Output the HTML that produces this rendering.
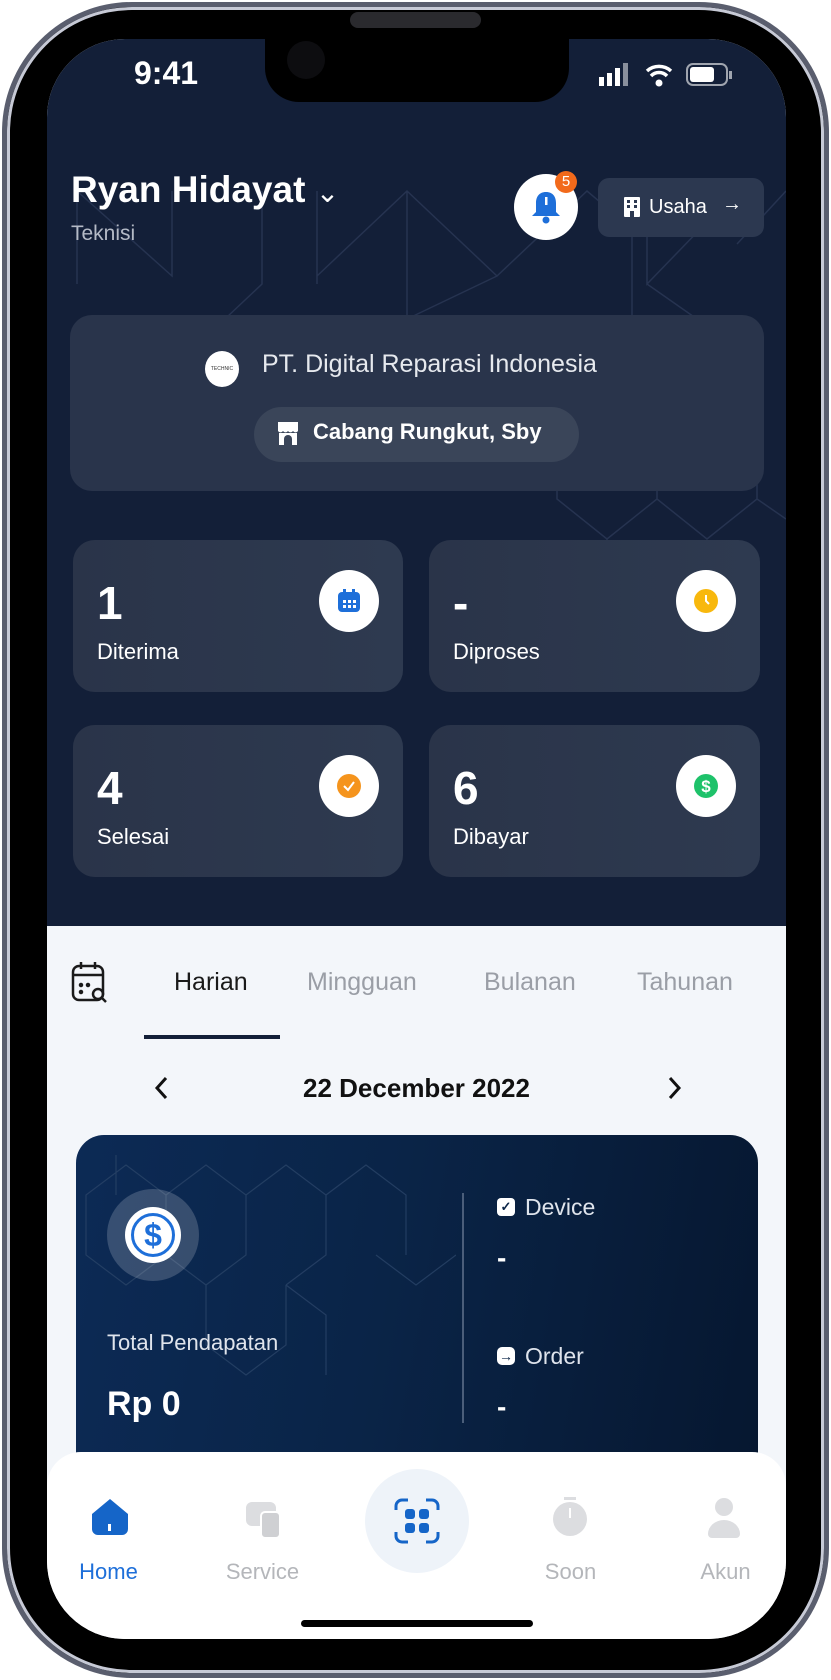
<!DOCTYPE html>
<html><head><meta charset="utf-8"><style>
*{margin:0;padding:0;box-sizing:border-box}
body{width:831px;height:1680px;background:#fff;position:relative;overflow:hidden;font-family:"Liberation Sans",sans-serif}
.a{position:absolute}
.frame{left:2px;top:2px;width:827px;height:1676px;border-radius:130px;background:#000;border:5px solid #5a5e6e;box-shadow:inset 0 0 0 3px #c7cad6}
.screen{left:47px;top:39px;width:739px;height:1600px;border-radius:78px;overflow:hidden;background:#f3f6fa}
.card{background:linear-gradient(90deg,#2a3449,#2e3a50);border-radius:22px}
.w{color:#fff}
.circ{background:#fff;border-radius:50%}
</style></head><body>
<div class="a frame"></div>
<div class="a" style="left:350px;top:12px;width:131px;height:16px;border-radius:8px;background:#2a2a2e"></div>
<div class="a screen">
  <div class="a" style="left:0;top:0;width:739px;height:887px;background:#131f38"></div>
  <svg class="a" style="left:0;top:0" width="739" height="700" stroke="#263350" stroke-width="1.5" fill="none">
    <path d="M30 152V245M30 152L125 237V152M215 152V245L180 278M270 152V245M270 237L360 152L450 237L540 152L585 190V280M360 152V280M450 237L360 280M600 152V245L690 152M600 245L650 280M739 152L690 205M510 360L560 320L610 360V460L560 500L510 460ZM610 360L660 320L710 360V460L660 500L610 460ZM560 500V560M710 460L739 480M560 320V280M660 320V280"/>
  </svg>
  <div class="a w" style="left:87px;top:16px;font-size:32px;font-weight:bold">9:41</div>
  <div class="a" style="left:218px;top:0;width:304px;height:63px;background:#000;border-radius:0 0 34px 34px"></div>
  <div class="a" style="left:240px;top:2px;width:38px;height:38px;border-radius:50%;background:#0d0d10"></div>
  <svg class="a" style="left:550px;top:22px" width="140" height="30">
    <rect x="2" y="16" width="5" height="9" fill="#fff"/><rect x="10" y="12" width="5" height="13" fill="#fff"/><rect x="18" y="7" width="5" height="18" fill="#fff"/><rect x="26" y="2" width="5" height="23" fill="#fff" opacity=".5"/>
    <path d="M50 10a18 18 0 0 1 24 0M54 15a11 11 0 0 1 16 0" stroke="#fff" stroke-width="3.5" fill="none"/><circle cx="62" cy="22" r="3.5" fill="#fff"/>
    <rect x="90" y="3" width="40" height="21" rx="6" stroke="#fff" stroke-opacity=".6" stroke-width="2" fill="none"/><rect x="93" y="6" width="24" height="15" rx="3" fill="#fff"/><rect x="132" y="10" width="3" height="8" fill="#fff" opacity=".6"/>
  </svg>
  <div class="a w" style="left:24px;top:130px;font-size:37px;font-weight:bold">Ryan Hidayat <span style="font-weight:normal;font-size:28px">&#8964;</span></div>
  <div class="a" style="left:24px;top:183px;font-size:21px;color:#b4bac6">Teknisi</div>
  <div class="a circ" style="left:467px;top:135px;width:64px;height:66px"></div>
  <svg class="a" style="left:482px;top:150px" width="34" height="36"><path d="M17 3c-7 0-10 5-10 11v9l-4 4h28l-4-4v-9c0-6-3-11-10-11z" fill="#1e6fd9"/><circle cx="17" cy="31" r="3.5" fill="#1e6fd9"/><rect x="16" y="8" width="2.5" height="8" fill="#fff"/></svg>
  <div class="a" style="left:508px;top:132px;width:22px;height:22px;border-radius:50%;background:#f26a1b;color:#fff;font-size:15px;text-align:center;line-height:22px">5</div>
  <div class="a" style="left:551px;top:139px;width:166px;height:59px;border-radius:11px;background:#2c3850"></div>
  <svg class="a" style="left:576px;top:157px" width="18" height="22"><rect x="1" y="1" width="16" height="20" rx="1" fill="#fff"/><g fill="#2c3850"><rect x="4" y="4" width="3" height="3"/><rect x="11" y="4" width="3" height="3"/><rect x="4" y="9" width="3" height="3"/><rect x="11" y="9" width="3" height="3"/><rect x="7" y="15" width="4" height="6"/></g></svg>
  <div class="a w" style="left:602px;top:157px;font-size:20px">Usaha</div>
  <div class="a w" style="left:675px;top:154px;font-size:20px">&#8594;</div>
  <div class="a" style="left:23px;top:276px;width:694px;height:176px;border-radius:22px;background:#29344b"></div>
  <div class="a circ" style="left:158px;top:312px;width:34px;height:36px;font-size:5px;color:#333;text-align:center;line-height:36px">TECHNIC</div>
  <div class="a w" style="left:215px;top:311px;font-size:25px;color:#e6e9ee">PT. Digital Reparasi Indonesia</div>
  <div class="a" style="left:207px;top:368px;width:325px;height:55px;border-radius:28px;background:#3a4559"></div>
  <svg class="a" style="left:229px;top:381px" width="24" height="26"><path d="M2 2h20v9a3 3 0 0 1-5 0 3 3 0 0 1-5 0 3 3 0 0 1-5 0 3 3 0 0 1-5 0z" fill="#fff"/><path d="M3 13h18v12H3z" fill="#fff"/><path d="M8 25v-6a4 4 0 0 1 8 0v6" fill="#3a4559"/></svg>
  <div class="a w" style="left:266px;top:380px;font-size:22px;font-weight:bold">Cabang Rungkut, Sby</div>

  <div class="a card" style="left:26px;top:501px;width:330px;height:152px"></div>
  <div class="a card" style="left:382px;top:501px;width:331px;height:152px"></div>
  <div class="a card" style="left:26px;top:686px;width:330px;height:152px"></div>
  <div class="a card" style="left:382px;top:686px;width:331px;height:152px"></div>
  <div class="a w" style="left:50px;top:537px;font-size:46px;font-weight:bold">1</div>
  <div class="a w" style="left:50px;top:600px;font-size:22px">Diterima</div>
  <div class="a w" style="left:406px;top:537px;font-size:46px;font-weight:bold">-</div>
  <div class="a w" style="left:406px;top:600px;font-size:22px">Diproses</div>
  <div class="a w" style="left:50px;top:722px;font-size:46px;font-weight:bold">4</div>
  <div class="a w" style="left:50px;top:785px;font-size:22px">Selesai</div>
  <div class="a w" style="left:406px;top:722px;font-size:46px;font-weight:bold">6</div>
  <div class="a w" style="left:406px;top:785px;font-size:22px">Dibayar</div>
  <div class="a circ" style="left:272px;top:531px;width:60px;height:62px"></div>
  <svg class="a" style="left:289px;top:549px" width="26" height="26"><rect x="2" y="4" width="22" height="20" rx="4" fill="#1e6fd9"/><rect x="7" y="1" width="3" height="6" fill="#1e6fd9"/><rect x="16" y="1" width="3" height="6" fill="#1e6fd9"/><g fill="#fff"><rect x="7" y="12" width="3" height="3"/><rect x="12" y="12" width="3" height="3"/><rect x="17" y="12" width="3" height="3"/><rect x="7" y="17" width="3" height="3"/><rect x="12" y="17" width="3" height="3"/><rect x="17" y="17" width="3" height="3"/></g></svg>
  <div class="a circ" style="left:629px;top:531px;width:60px;height:62px"></div>
  <svg class="a" style="left:646px;top:549px" width="26" height="26"><circle cx="13" cy="13" r="12" fill="#f8b80d"/><path d="M13 7v6l3 3" stroke="#fff" stroke-width="2" fill="none"/></svg>
  <div class="a circ" style="left:272px;top:716px;width:60px;height:62px"></div>
  <svg class="a" style="left:289px;top:734px" width="26" height="26"><circle cx="13" cy="13" r="12" fill="#f5941d"/><path d="M8 13l4 4 6-8" stroke="#fff" stroke-width="2" fill="none"/></svg>
  <div class="a circ" style="left:629px;top:716px;width:60px;height:62px"></div>
  <svg class="a" style="left:646px;top:734px" width="26" height="26"><circle cx="13" cy="13" r="12" fill="#1ec26a"/><text x="13" y="19" font-size="17" font-weight="bold" fill="#fff" text-anchor="middle" font-family="Liberation Sans">$</text></svg>

  <svg class="a" style="left:24px;top:922px" width="38" height="44" fill="none" stroke="#1a1a1a" stroke-width="2.5"><rect x="2" y="5" width="30" height="34" rx="6"/><path d="M2 14h30M10 1v7M24 1v7"/><circle cx="27" cy="33" r="5"/><path d="M31 37l4 4"/><circle cx="10" cy="24" r="1" fill="#1a1a1a"/><circle cx="10" cy="31" r="1" fill="#1a1a1a"/><circle cx="17" cy="24" r="1" fill="#1a1a1a"/></svg>
  <div class="a" style="left:127px;top:929px;font-size:25px;color:#1a1a1a">Harian</div>
  <div class="a" style="left:260px;top:929px;font-size:25px;color:#9a9ea6">Mingguan</div>
  <div class="a" style="left:437px;top:929px;font-size:25px;color:#9a9ea6">Bulanan</div>
  <div class="a" style="left:590px;top:929px;font-size:25px;color:#9a9ea6">Tahunan</div>
  <div class="a" style="left:97px;top:996px;width:136px;height:4px;background:#131f38"></div>
  <svg class="a" style="left:105px;top:1036px" width="20" height="26"><path d="M14 3L5 13l9 10" stroke="#111" stroke-width="3" fill="none"/></svg>
  <svg class="a" style="left:617px;top:1036px" width="20" height="26"><path d="M6 3l9 10-9 10" stroke="#111" stroke-width="3" fill="none"/></svg>
  <div class="a" style="left:0;top:1034px;width:739px;text-align:center;font-size:26px;font-weight:bold;color:#111">22 December 2022</div>

  <div class="a" style="left:29px;top:1096px;width:682px;height:340px;border-radius:28px 28px 0 0;background:linear-gradient(100deg,#0c2a55 0%,#0a2447 45%,#061730 100%);overflow:hidden">
    <svg class="a" style="left:0;top:0" width="380" height="260" stroke="#2a4468" stroke-width="1.2" fill="none" opacity=".8"><path d="M10 60l40-30 40 30v60l-40 30-40-30zM90 60l40-30 40 30v60l-40 30-40-30zM170 60l40-30 40 30v60l-40 30M250 60l40-30 40 30v60M130 150v60l40 30 40-30v-60M210 150l40 30v60M40 20v40M300 120l40 30 40-30"/></svg>
  </div>
  <div class="a" style="left:60px;top:1150px;width:92px;height:92px;border-radius:50%;background:rgba(255,255,255,.18)"></div>
  <div class="a" style="left:78px;top:1168px;width:56px;height:56px;border-radius:50%;background:#fff"></div>
  <div class="a" style="left:84px;top:1174px;width:44px;height:44px;border-radius:50%;border:3.5px solid #1e6fd9;color:#1e6fd9;font-size:32px;font-weight:bold;text-align:center;line-height:38px">$</div>
  <div class="a w" style="left:60px;top:1291px;font-size:22px;color:#dfe4ec">Total Pendapatan</div>
  <div class="a w" style="left:60px;top:1346px;font-size:34px;font-weight:bold">Rp 0</div>
  <div class="a" style="left:415px;top:1154px;width:2px;height:230px;background:#4b5e7a"></div>
  <div class="a" style="left:450px;top:1159px;width:18px;height:18px;border-radius:4px;background:#fff;color:#0a2447;font-size:13px;text-align:center;line-height:18px;font-weight:bold">&#10003;</div>
  <div class="a w" style="left:478px;top:1155px;font-size:23px;color:#dfe4ec">Device</div>
  <div class="a w" style="left:450px;top:1203px;font-size:28px;font-weight:bold">-</div>
  <div class="a" style="left:450px;top:1308px;width:18px;height:18px;border-radius:5px;background:#fff;color:#0a2447;font-size:14px;text-align:center;line-height:18px;font-weight:bold">&#8594;</div>
  <div class="a w" style="left:478px;top:1304px;font-size:23px;color:#dfe4ec">Order</div>
  <div class="a w" style="left:450px;top:1352px;font-size:28px;font-weight:bold">-</div>

  <div class="a" style="left:0;top:1413px;width:739px;height:200px;background:#fff;border-radius:34px 34px 0 0"></div>
  <div class="a" style="left:318px;top:1430px;width:104px;height:104px;border-radius:50%;background:#eef3f9"></div>
  <svg class="a" style="left:43px;top:1458px" width="40" height="40"><path d="M20 2L38 17v15a6 6 0 0 1-6 6H8a6 6 0 0 1-6-6V17z" fill="#1565c8"/><rect x="18" y="27" width="3" height="7" fill="#fff"/></svg>
  <svg class="a" style="left:197px;top:1461px" width="38" height="38"><rect x="2" y="2" width="30" height="24" rx="6" fill="#dcdde0"/><rect x="17" y="12" width="19" height="26" rx="4" fill="#cfd0d3" stroke="#fff" stroke-width="2"/></svg>
  <svg class="a" style="left:347px;top:1459px" width="46" height="46" fill="none" stroke="#1565c8" stroke-width="3"><path d="M2 12V8a6 6 0 0 1 6-6h6M32 2h6a6 6 0 0 1 6 6v4M44 34v4a6 6 0 0 1-6 6h-6M14 44H8a6 6 0 0 1-6-6v-4"/><g fill="#1565c8" stroke="none"><rect x="11" y="11" width="10" height="10" rx="3"/><rect x="25" y="11" width="10" height="10" rx="3"/><rect x="11" y="25" width="10" height="10" rx="3"/><rect x="25" y="25" width="10" height="10" rx="3"/></g></svg>
  <svg class="a" style="left:504px;top:1457px" width="38" height="42"><rect x="13" y="1" width="12" height="3" fill="#dcdde0"/><circle cx="19" cy="23" r="17" fill="#dcdde0"/><rect x="18" y="12" width="2" height="10" fill="#fff"/></svg>
  <svg class="a" style="left:660px;top:1457px" width="34" height="42"><circle cx="17" cy="11" r="9" fill="#dcdde0"/><path d="M1 38a16 14 0 0 1 32 0 4 4 0 0 1-4 4H5a4 4 0 0 1-4-4z" fill="#dcdde0"/></svg>
  <div class="a" style="left:0;top:1520px;width:123px;text-align:center;font-size:22px;color:#1e6fd9">Home</div>
  <div class="a" style="left:154px;top:1520px;width:123px;text-align:center;font-size:22px;color:#b4b6ba">Service</div>
  <div class="a" style="left:462px;top:1520px;width:123px;text-align:center;font-size:22px;color:#b4b6ba">Soon</div>
  <div class="a" style="left:617px;top:1520px;width:123px;text-align:center;font-size:22px;color:#b4b6ba">Akun</div>
  <div class="a" style="left:254px;top:1581px;width:232px;height:7px;border-radius:4px;background:#000"></div>
</div>
</body></html>
